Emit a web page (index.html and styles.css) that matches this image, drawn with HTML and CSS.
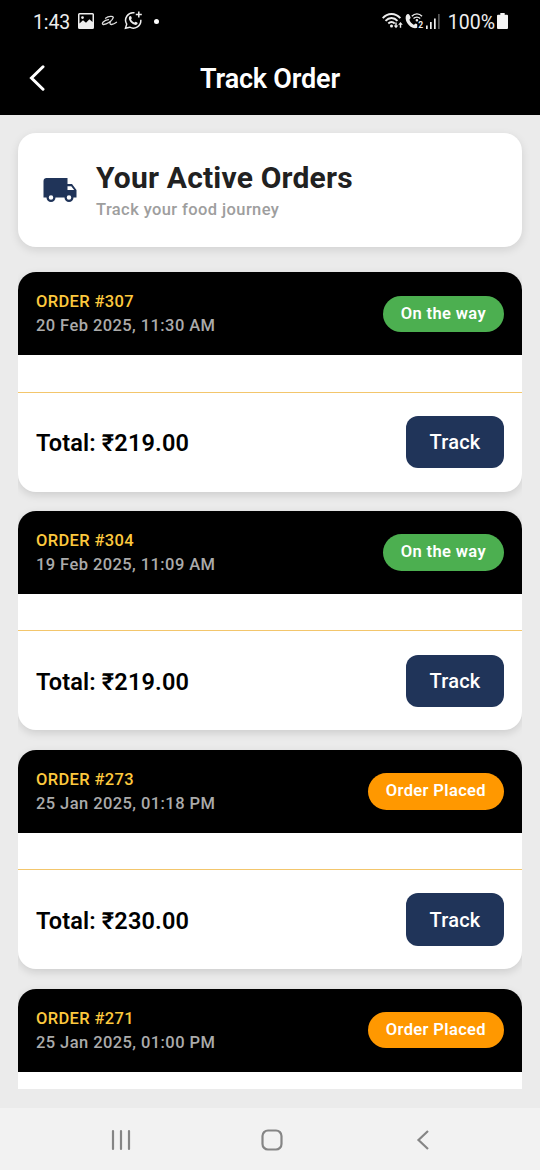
FILE: index.html
```html
<!DOCTYPE html>
<html lang="en">
<head>
<meta charset="utf-8">
<title>Track Order</title>
<link rel="stylesheet" href="styles.css">
</head>
<body>
<div class="screen">
  <div class="status">
    <div class="status-left">
      <span class="clock">1:43</span>
      <svg class="ic-picture" width="16" height="16" viewBox="0 0 16 16"><path fill="#eee" fill-rule="evenodd" d="M1.500 0h13A1.500 1.500 0 0 1 16 1.500v13A1.500 1.500 0 0 1 14.500 16h-13A1.500 1.500 0 0 1 0 14.500v-13A1.500 1.500 0 0 1 1.500 0zM1.500 1.500v9L5 7.200l3 2.600 3.400-3.600 3.100 2.900V1.500zM4.500 3.200a1.400 1.400 0 1 1 0 2.800 1.400 1.400 0 0 1 0-2.800z"/></svg>
      <svg class="ic-swirl" width="17" height="12" viewBox="0 0 17 12"><path fill="none" stroke="#ddd" stroke-width="1.300" stroke-linecap="round" stroke-linejoin="round" d="M4.500 3.200C7.500 1.200 12.500.8 12.300 2.600 11.500 5.500 5.500 9.800 2.300 9.500-.3 8.800 3 5 7.500 4.600M9.800 6.200C8.500 8 8.800 9.600 10.500 9.500 12.500 9.300 14 8.500 15.500 7.300"/></svg>
      <svg class="ic-chat" width="19" height="19" viewBox="0 0 19 19"><g fill="none" stroke="#eee" stroke-width="1.500"><path d="M10.500 1.800A7.600 7.600 0 0 0 2.700 13.200L1.500 17.300l4.200-1.100A7.600 7.600 0 0 0 16.800 8.800"/><path d="M14.800.6v6M11.800 3.600h6"/></g><path fill="#eee" d="M5.300 5.600c.8-.9 1.600-.8 1.900 0l.6 1.500c.1.500-.8 1-.7 1.500.6 1.400 1.800 2.500 3.200 3 .5 0 .9-1 1.400-.9l1.500.8c.8.400.4 1.400-.3 2-2.800 2.100-9.900-4-7.600-7.900z"/></svg>
      <i class="dot"></i>
    </div>
    <div class="status-right">
      <svg width="21" height="18" viewBox="0 0 21 18"><g fill="none" stroke="#eee" stroke-width="1.900"><path d="M.7 6.200C5.500.5 13.500.5 18.300 6.200"/><path d="M3.500 8.900C7 5 12 5 15.500 8.900"/><path d="M6.300 11.500c2-2 4.400-2 6.400 0"/></g><circle cx="9.500" cy="13.900" r="1.500" fill="#eee"/><path fill="#eee" d="M13.300 10.500h1.400v3h1.600L14 16.200l-2.300-2.700h1.600zM17.800 15.800h1.400v-3h1.600l-2.300-2.700-2.300 2.700h1.600z"/></svg>
      <svg width="19" height="18" viewBox="0 0 19 18"><path fill="#eee" d="M1.200 3.200c1-1.600 2.500-1.700 3.300-.2l1 2.200c.5 1-1.200 1.800-1 2.800.7 2 2.300 3.700 4.200 4.700 1 .2 1.500-1.500 2.500-1l1 .5v3.600c-3.500 1.500-7.800-1-10-4.800C.5 8.200.2 5 1.200 3.200z"/><g fill="none" stroke="#eee" stroke-width="1.400"><path d="M6.800 4.300c3-3.200 7.300-3.200 10.200 0M8.500 6.600c2-2 4.800-2 6.700 0"/><circle cx="11.900" cy="8.300" r=".6"/></g><text x="13.200" y="16" class="sim">2</text></svg>
      <svg class="ic-signal" width="14" height="15" viewBox="0 0 14 15"><path fill="#eee" d="M0 11.500h1.700V15H0zM4 8h1.700v7H4zM8 4.500h1.700V15H8z"/><path fill="#555" d="M12 0h1.700v15H12z"/></svg>
      <span class="percent">100%</span>
      <svg class="ic-battery" width="11" height="16" viewBox="0 0 11 16"><path fill="#f4f4f4" d="M3.300 0h4.400v1.800H10a1 1 0 0 1 1 1V15a1 1 0 0 1-1 1H1a1 1 0 0 1-1-1V2.800a1 1 0 0 1 1-1h2.300z"/></svg>
    </div>
  </div>
  <header class="topbar">
    <svg class="back" width="16" height="26" viewBox="0 0 16 26"><path fill="none" stroke="#fff" stroke-width="3" stroke-linecap="round" d="M14 1.800 2.500 13 14 24.200"/></svg>
    <h1 class="title">Track Order</h1>
  </header>
  <main class="content">
    <section class="hero">
      <svg class="truck" width="36" height="36" viewBox="0 0 24 24"><path fill="#203459" d="M18 18.500a1.500 1.500 0 0 0 1.500-1.500 1.500 1.500 0 0 0-1.500-1.500 1.500 1.500 0 0 0-1.500 1.500 1.500 1.500 0 0 0 1.500 1.500m1.500-9H17V12h4.460L19.500 9.500M6 18.500A1.500 1.500 0 0 0 7.500 17 1.500 1.500 0 0 0 6 15.500 1.500 1.500 0 0 0 4.500 17 1.500 1.500 0 0 0 6 18.500M20 8l3 4v5h-2a3 3 0 0 1-3 3 3 3 0 0 1-3-3H9a3 3 0 0 1-3 3 3 3 0 0 1-3-3H1V6c0-1.110.89-2 2-2h14v4h3z"/></svg>
      <div>
        <h2 class="hero-title">Your Active Orders</h2>
        <p class="hero-sub">Track your food journey</p>
      </div>
    </section>
    <div class="orders">
      <article class="card">
        <div class="card-head"><div><div class="order-id">ORDER #307</div><div class="date">20 Feb 2025, 11:30 AM</div></div><span class="badge way">On the way</span></div>
        <div class="card-foot"><span class="total">Total: ₹219.00</span><button class="track">Track</button></div>
      </article>
      <article class="card">
        <div class="card-head"><div><div class="order-id">ORDER #304</div><div class="date">19 Feb 2025, 11:09 AM</div></div><span class="badge way">On the way</span></div>
        <div class="card-foot"><span class="total">Total: ₹219.00</span><button class="track">Track</button></div>
      </article>
      <article class="card">
        <div class="card-head"><div><div class="order-id">ORDER #273</div><div class="date">25 Jan 2025, 01:18 PM</div></div><span class="badge placed">Order Placed</span></div>
        <div class="card-foot"><span class="total">Total: ₹230.00</span><button class="track">Track</button></div>
      </article>
      <article class="card">
        <div class="card-head"><div><div class="order-id">ORDER #271</div><div class="date">25 Jan 2025, 01:00 PM</div></div><span class="badge placed">Order Placed</span></div>
      </article>
    </div>
  </main>
  <nav class="navbar">
    <svg width="22" height="22" viewBox="0 0 22 22"><path fill="none" stroke="#858585" stroke-width="2.200" stroke-linecap="round" d="M3 2v18M11 2v18M19 2v18"/></svg>
    <svg width="22" height="22" viewBox="0 0 22 22"><rect x="1.500" y="1.500" width="19" height="19" rx="5.500" fill="none" stroke="#858585" stroke-width="2.200"/></svg>
    <svg width="22" height="22" viewBox="0 0 22 22"><path fill="none" stroke="#858585" stroke-width="2.200" d="M16 2 6.500 11l9.500 9"/></svg>
  </nav>
</div>
</body>
</html>
```
FILE: styles.css
```css
* { box-sizing: border-box; margin: 0; padding: 0; }
body { background: #ebebeb; font-family: Roboto, "Noto Sans", sans-serif; }
.screen { width: 540px; height: 1170px; display: flex; flex-direction: column; overflow: hidden; }
.status { height: 42px; background: #000; color: #eee; display: flex; justify-content: space-between; padding: 0 32px 0 33px; font-size: 19.500px; }
.status-left, .status-right { display: flex; align-items: center; }
.clock { letter-spacing: -.1px; padding-top: 2px; }
.ic-picture { margin-left: 8px; margin-top: -1px; }
.ic-swirl { margin-left: 7px; }
.ic-chat { margin-left: 6px; margin-top: -1px; }
.dot { width: 5px; height: 5px; border-radius: 50%; background: #fff; margin-left: 11px; }
.sim { font: 700 8.500px Roboto, sans-serif; fill: #eee; }
.status-right svg + svg { margin-left: 2px; }
.percent { margin: 2px 2px 0 8px; }
.ic-signal { margin-top: 1px; }
.ic-battery { margin-top: -1px; }
.topbar { height: 73px; background: #000; display: grid; grid-template-columns: 80px 1fr 80px; align-items: center; }
.back { margin-left: 28.500px; margin-top: -2px; }
.title { color: #fff; font-size: 27px; font-weight: 600; letter-spacing: -.2px; text-align: center; line-height: 73px; padding-top: 1px; }
.content { flex: 1; padding: 18px 18px 0; display: flex; flex-direction: column; min-height: 0; }
.hero { height: 114px; flex: none; background: #fff; border-radius: 18px; padding: 0 24px; display: flex; align-items: center; gap: 18px; box-shadow: 0 3px 10px rgba(0,0,0,.11); }
.truck { margin-top: -1px; }
.hero-title { color: #212121; font-size: 30px; font-weight: 700; letter-spacing: .2px; line-height: 36px; }
.hero-sub { color: #9e9e9e; font-size: 16.500px; font-weight: 500; letter-spacing: .4px; line-height: 21px; margin-top: 3px; }
.orders { height: 836px; flex: none; margin-top: 6px; padding-top: 19.300px; overflow: hidden; }
.card { height: 219.300px; margin-bottom: 19.450px; background: #fff; border-radius: 18px; box-shadow: 0 3px 9px rgba(0,0,0,.13); display: flex; flex-direction: column; }
.card-head { height: 83px; flex: none; background: #000; border-radius: 18px 18px 0 0; padding: 0 18px; display: flex; align-items: center; justify-content: space-between; }
.order-id { color: #fdc93e; font-size: 16.500px; font-weight: 500; line-height: 21px; letter-spacing: .35px; }
.date { color: #ababab; font-size: 16.500px; font-weight: 500; line-height: 21px; margin-top: 3px; letter-spacing: .42px; }
.badge { height: 36.500px; border-radius: 19px; padding: 0 18px; color: #fff; font-size: 16.500px; font-weight: 600; line-height: 36.500px; letter-spacing: .36px; }
.way { background: #4caf50; }
.placed { background: #ff9800; }
.card-foot { margin-top: 36.300px; border-top: 1px solid #f3c66c; flex: 1; padding: 0 18px; display: flex; align-items: center; justify-content: space-between; }
.total { color: #000; font-size: 23.500px; font-weight: 600; letter-spacing: .15px; padding-top: 2px; }
.track { width: 98px; height: 52.500px; border: 0; border-radius: 12px; background: #203459; color: #fff; font: 500 20px Roboto, sans-serif; letter-spacing: .2px; }
.navbar { height: 62px; flex: none; background: #f2f2f2; display: flex; justify-content: space-between; align-items: center; padding: 2px 106.500px 0 110px; }
```
